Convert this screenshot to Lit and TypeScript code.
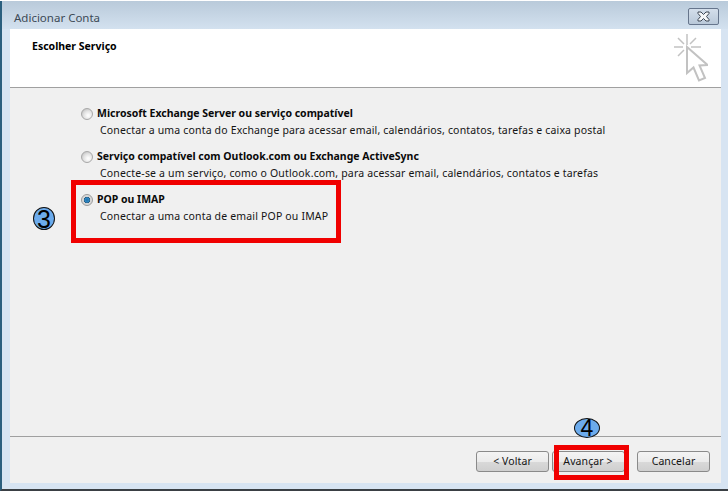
import { LitElement, html, css } from "lit";
import { customElement } from "lit/decorators.js";

@customElement("app-root")
export class AppRoot extends LitElement {
  static styles = css`
    :host { display: block; width: 728px; height: 491px; position: relative; overflow: hidden; background: #fff; font-family: "Noto Sans", "DejaVu Sans", sans-serif; color: #1a1a1a; }
    .win { box-sizing: border-box; width: 728px; height: 490px; margin-top: 1px; display: flex; flex-direction: column; border-left: 2px solid #2b5f7e; border-bottom: 2px solid #3a3f44; background: #d7e4f2; padding: 0 7px 6px 8px; }
    .title { height: 28px; flex: none; margin: 0 -7px 0 -8px; padding: 4px 9px 0 12px; box-sizing: border-box; display: flex; align-items: center; justify-content: space-between; background: linear-gradient(#b9cada, #d3e1ef); font-size: 11.5px; color: #3c4a56; }
    .close { box-sizing: border-box; width: 31px; height: 17px; margin-top: -1px; border: 1px solid #66758c; border-radius: 2px; background: linear-gradient(#d4dfeb, #b9c8d9); display: flex; align-items: center; justify-content: center; }
    .body { flex: 1; display: flex; flex-direction: column; background: #f0f0f0; min-height: 0; }
    .head { height: 59px; flex: none; box-sizing: border-box; background: #fff; border-bottom: 1px solid #a0a0a0; display: flex; justify-content: space-between; padding: 0 13px 0 22px; }
    .head h1 { margin: 9px 0 0; font-size: 10.5px; line-height: 16px; font-weight: 700; color: #000; }
    .cursor { margin-top: 5px; }
    .opts { flex: 1; display: flex; flex-direction: column; gap: 11px; padding: 18px 0 0 71px; }
    .opt { display: grid; grid-template-columns: 12px auto; column-gap: 4px; row-gap: 1px; align-items: center; height: 32px; }
    .radio { box-sizing: border-box; width: 12px; height: 12px; border-radius: 50%; border: 1px solid #a8a8a8; background: radial-gradient(circle at 62% 65%, #fbfbfb 10%, #e2e2e2 50%, #bcbcbc 90%); }
    .radio.on { border-color: #9a9a9a; background: radial-gradient(circle at 50% 50%, #1f6fa8 0, #2f88c4 30%, #27597e 42%, #d4d4d4 50%, #e6e6e6); }
    .opt b { font-size: 10.5px; line-height: 15px; font-weight: 700; color: #0a0a0a; white-space: nowrap; letter-spacing: -0.01px; }
    .opt span { grid-column: 2; font-size: 10.5px; line-height: 15px; color: #141414; padding-left: 3px; white-space: nowrap; letter-spacing: 0.17px; }
    .foot { height: 47px; flex: none; border-top: 1px solid #a0a0a0; display: flex; justify-content: flex-end; align-items: flex-start; gap: 2.500px; padding: 14px 11px 0 0; box-sizing: border-box; }
    .btn { box-sizing: border-box; width: 73px; height: 21px; border: 1px solid #8a8a8a; border-radius: 3px; background: linear-gradient(#f4f4f4 0, #ebebeb 50%, #d9d9d9 52%, #cfcfcf); font-size: 10.5px; line-height: 18px; text-align: center; color: #141414; letter-spacing: 0.1px; }
    .btn.last { margin-left: 10px; }
    .mark { position: absolute; box-sizing: border-box; border: 5px solid #f00000; }
    .num { position: absolute; box-sizing: border-box; border: 1px solid #111; border-radius: 50%; background: #6cabec; font-family: "Liberation Sans", sans-serif; color: #000; text-align: center; }
    .n3 { left: 33px; top: 207px; width: 22px; height: 23px; font-size: 25px; line-height: 22px; }
    .n4 { left: 574px; top: 418px; width: 26px; height: 20px; font-size: 23px; line-height: 19px; }
    .m3 { left: 71px; top: 180px; width: 270px; height: 63px; }
    .m4 { left: 554px; top: 445px; width: 75px; height: 35px; }
  `;

  render() {
    return html`
      <div class="win">
        <div class="title">
          <span>Adicionar Conta</span>
          <div class="close">
            <svg width="15" height="11" viewBox="0 0 15 11">
              <path d="M2 1h3l2.500 2.500L10 1h3v1.500L10.500 5.500 13 8.500V10h-3L7.500 7.500 5 10H2V8.500L4.500 5.500 2 2.500z" fill="#f4f6f8" stroke="#3d4654" stroke-width="1"/>
            </svg>
          </div>
        </div>
        <div class="body">
          <div class="head">
            <h1>Escolher Serviço</h1>
            <svg class="cursor" width="34" height="50" viewBox="0 0 34 50" fill="none">
              <g stroke="#c2c2c2" stroke-width="1.500">
                <path d="M13 0v11M13 16v8M0 13h9M17 13h10M4 4l6 6M22 4l-6 6M4 22l6-6"/>
              </g>
              <path d="M13 13V39l6.500-5.500 5.500 13 6-2.500-5.500-12.500 8-.5z" fill="#fff" stroke="#c2c2c2" stroke-width="2" stroke-linejoin="miter"/>
            </svg>
          </div>
          <div class="opts">
            <div class="opt"><div class="radio"></div><b>Microsoft Exchange Server ou serviço compatível</b><span>Conectar a uma conta do Exchange para acessar email, calendários, contatos, tarefas e caixa postal</span></div>
            <div class="opt"><div class="radio"></div><b>Serviço compatível com Outlook.com ou Exchange ActiveSync</b><span>Conecte-se a um serviço, como o Outlook.com, para acessar email, calendários, contatos e tarefas</span></div>
            <div class="opt"><div class="radio on"></div><b>POP ou IMAP</b><span>Conectar a uma conta de email POP ou IMAP</span></div>
          </div>
          <div class="foot">
            <div class="btn">&lt; Voltar</div>
            <div class="btn">Avançar &gt;</div>
            <div class="btn last">Cancelar</div>
          </div>
        </div>
      </div>
      <div class="mark m3"></div>
      <div class="mark m4"></div>
      <div class="num n3">3</div>
      <div class="num n4">4</div>
    `;
  }
}
